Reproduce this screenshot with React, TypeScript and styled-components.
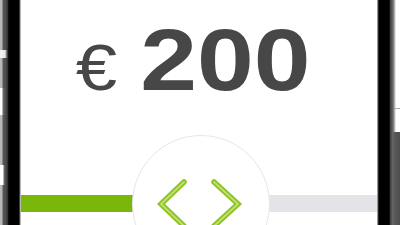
import React from "react";
import styled, { createGlobalStyle } from "styled-components";

const Global = createGlobalStyle`
  html, body { margin: 0; padding: 0; background: #ffffff; }
  body { width: 400px; height: 225px; overflow: hidden; }
  #root { width: 400px; height: 225px; }
`;

const Frame = styled.div`
  display: flex;
  width: 400px;
  height: 225px;
  overflow: hidden;
  background: #ffffff;
`;

const Side = styled.div`
  display: flex;
  flex: none;
  height: 225px;
`;

const Strip = styled.div<{ $w: number }>`
  display: flex;
  flex-direction: column;
  width: ${(p) => p.$w}px;
  height: 225px;
`;

const StripSeg = styled.div<{ $h: number; $bg: string }>`
  flex: none;
  height: ${(p) => p.$h}px;
  background: ${(p) => p.$bg};
`;

const Bezel = styled.div<{ $w: number; $bg: string }>`
  width: ${(p) => p.$w}px;
  height: 225px;
  background: ${(p) => p.$bg};
`;

const Screen = styled.div`
  flex: 1;
  display: flex;
  flex-direction: column;
  background: #ffffff;
  position: relative;
`;

const PriceRow = styled.div`
  display: flex;
  align-items: baseline;
  justify-content: center;
  height: 112px;
  padding-top: 16px;
  box-sizing: border-box;
  padding-right: 10px;
  color: #474747;
  font-family: "Liberation Sans", Arial, sans-serif;
  transform: scaleX(1.16);
  transform-origin: 178px 0;
`;

const Currency = styled.span`
  font-size: 64px;
  line-height: 88px;
  font-weight: 400;
  margin-right: 20px;
`;

const Amount = styled.span`
  font-size: 88px;
  line-height: 88px;
  font-weight: 700;
`;

const SliderArea = styled.div`
  position: relative;
  padding-top: 83px;
`;

const Track = styled.div`
  display: flex;
  height: 17px;
`;

const Fill = styled.div<{ $w: number }>`
  width: ${(p) => p.$w}px;
  background: #79b80a;
`;

const Rest = styled.div`
  flex: 1;
  background: #e4e3e8;
`;

const Knob = styled.div`
  position: absolute;
  left: 111px;
  top: 23px;
  width: 136px;
  height: 136px;
  border-radius: 50%;
  background: #ffffff;
  border: 1.5px solid #e6e5ea;
`;

const KnobIcon = styled.svg`
  position: absolute;
  left: 0;
  top: 0;
  width: 136px;
  height: 136px;
`;

export default function App() {
  return (
    <Frame>
      <Global />
      <Side>
        <Strip $w={8}>
          <StripSeg $h={50} $bg="linear-gradient(90deg,#b8b8b8 0,#b8b8b8 2px,#565656 3px,#4a4a4a 6px,#2a2a2a 8px)" />
          <StripSeg $h={8} $bg="linear-gradient(90deg,#f2f2f2 0,#e8e8e8 5px,#5a5a5a 7px,#2a2a2a 8px)" />
          <StripSeg $h={30} $bg="linear-gradient(90deg,#b8b8b8 0,#b8b8b8 2px,#565656 3px,#4a4a4a 6px,#2a2a2a 8px)" />
          <StripSeg $h={27} $bg="linear-gradient(90deg,#ffffff 0,#ffffff 2px,#6a6a6a 3px,#4a4a4a 6px,#2a2a2a 8px)" />
          <StripSeg $h={50} $bg="linear-gradient(90deg,#b8b8b8 0,#b8b8b8 2px,#565656 3px,#4a4a4a 6px,#2a2a2a 8px)" />
          <StripSeg $h={20} $bg="linear-gradient(90deg,#ffffff 0,#ffffff 3px,#6a6a6a 4px,#4a4a4a 6px,#2a2a2a 8px)" />
          <StripSeg $h={40} $bg="linear-gradient(90deg,#b8b8b8 0,#b8b8b8 2px,#565656 3px,#4a4a4a 6px,#2a2a2a 8px)" />
        </Strip>
        <Bezel $w={13} $bg="linear-gradient(90deg,#101010 0,#000 2px,#000 11px,#7a7a7a 12px,#f4f4f4 13px)" />
      </Side>
      <Screen>
        <PriceRow>
          <Currency>€</Currency>
          <Amount>200</Amount>
        </PriceRow>
        <SliderArea>
          <Track>
            <Fill $w={178} />
            <Rest />
          </Track>
          <Knob>
            <KnobIcon viewBox="0 0 136 136">
              <polyline points="51,46 28,68 51,90" fill="none" stroke="#8cc31c" strokeWidth="5.5" strokeLinecap="round" strokeLinejoin="miter" />
              <polyline points="51,46 28,68 51,90" fill="none" stroke="#c2df78" strokeWidth="1.8" strokeLinecap="round" />
              <polyline points="81,46 105,68 81,90" fill="none" stroke="#8cc31c" strokeWidth="5.5" strokeLinecap="round" strokeLinejoin="miter" />
              <polyline points="81,46 105,68 81,90" fill="none" stroke="#c2df78" strokeWidth="1.8" strokeLinecap="round" />
            </KnobIcon>
          </Knob>
        </SliderArea>
      </Screen>
      <Side>
        <Bezel $w={13} $bg="linear-gradient(90deg,#e8e8e8 0,#4a4a4a 1px,#000 2px,#000 12px,#222 13px)" />
        <Strip $w={10}>
          <StripSeg $h={108} $bg="linear-gradient(90deg,#3a3a3a 0,#6a6a6a 3px,#c8c8c8 5px,#ffffff 6px)" />
          <StripSeg $h={1} $bg="linear-gradient(90deg,#3a3a3a 0,#6a6a6a 3px,#b0b0b0 5px,#a8a8a8 10px)" />
          <StripSeg $h={23} $bg="linear-gradient(90deg,#3a3a3a 0,#6a6a6a 3px,#c8c8c8 5px,#ffffff 6px)" />
          <StripSeg $h={93} $bg="linear-gradient(90deg,#3a3a3a 0,#6a6a6a 3px,#5a5a5a 4px,#4e4e4e 10px)" />
        </Strip>
      </Side>
    </Frame>
  );
}
